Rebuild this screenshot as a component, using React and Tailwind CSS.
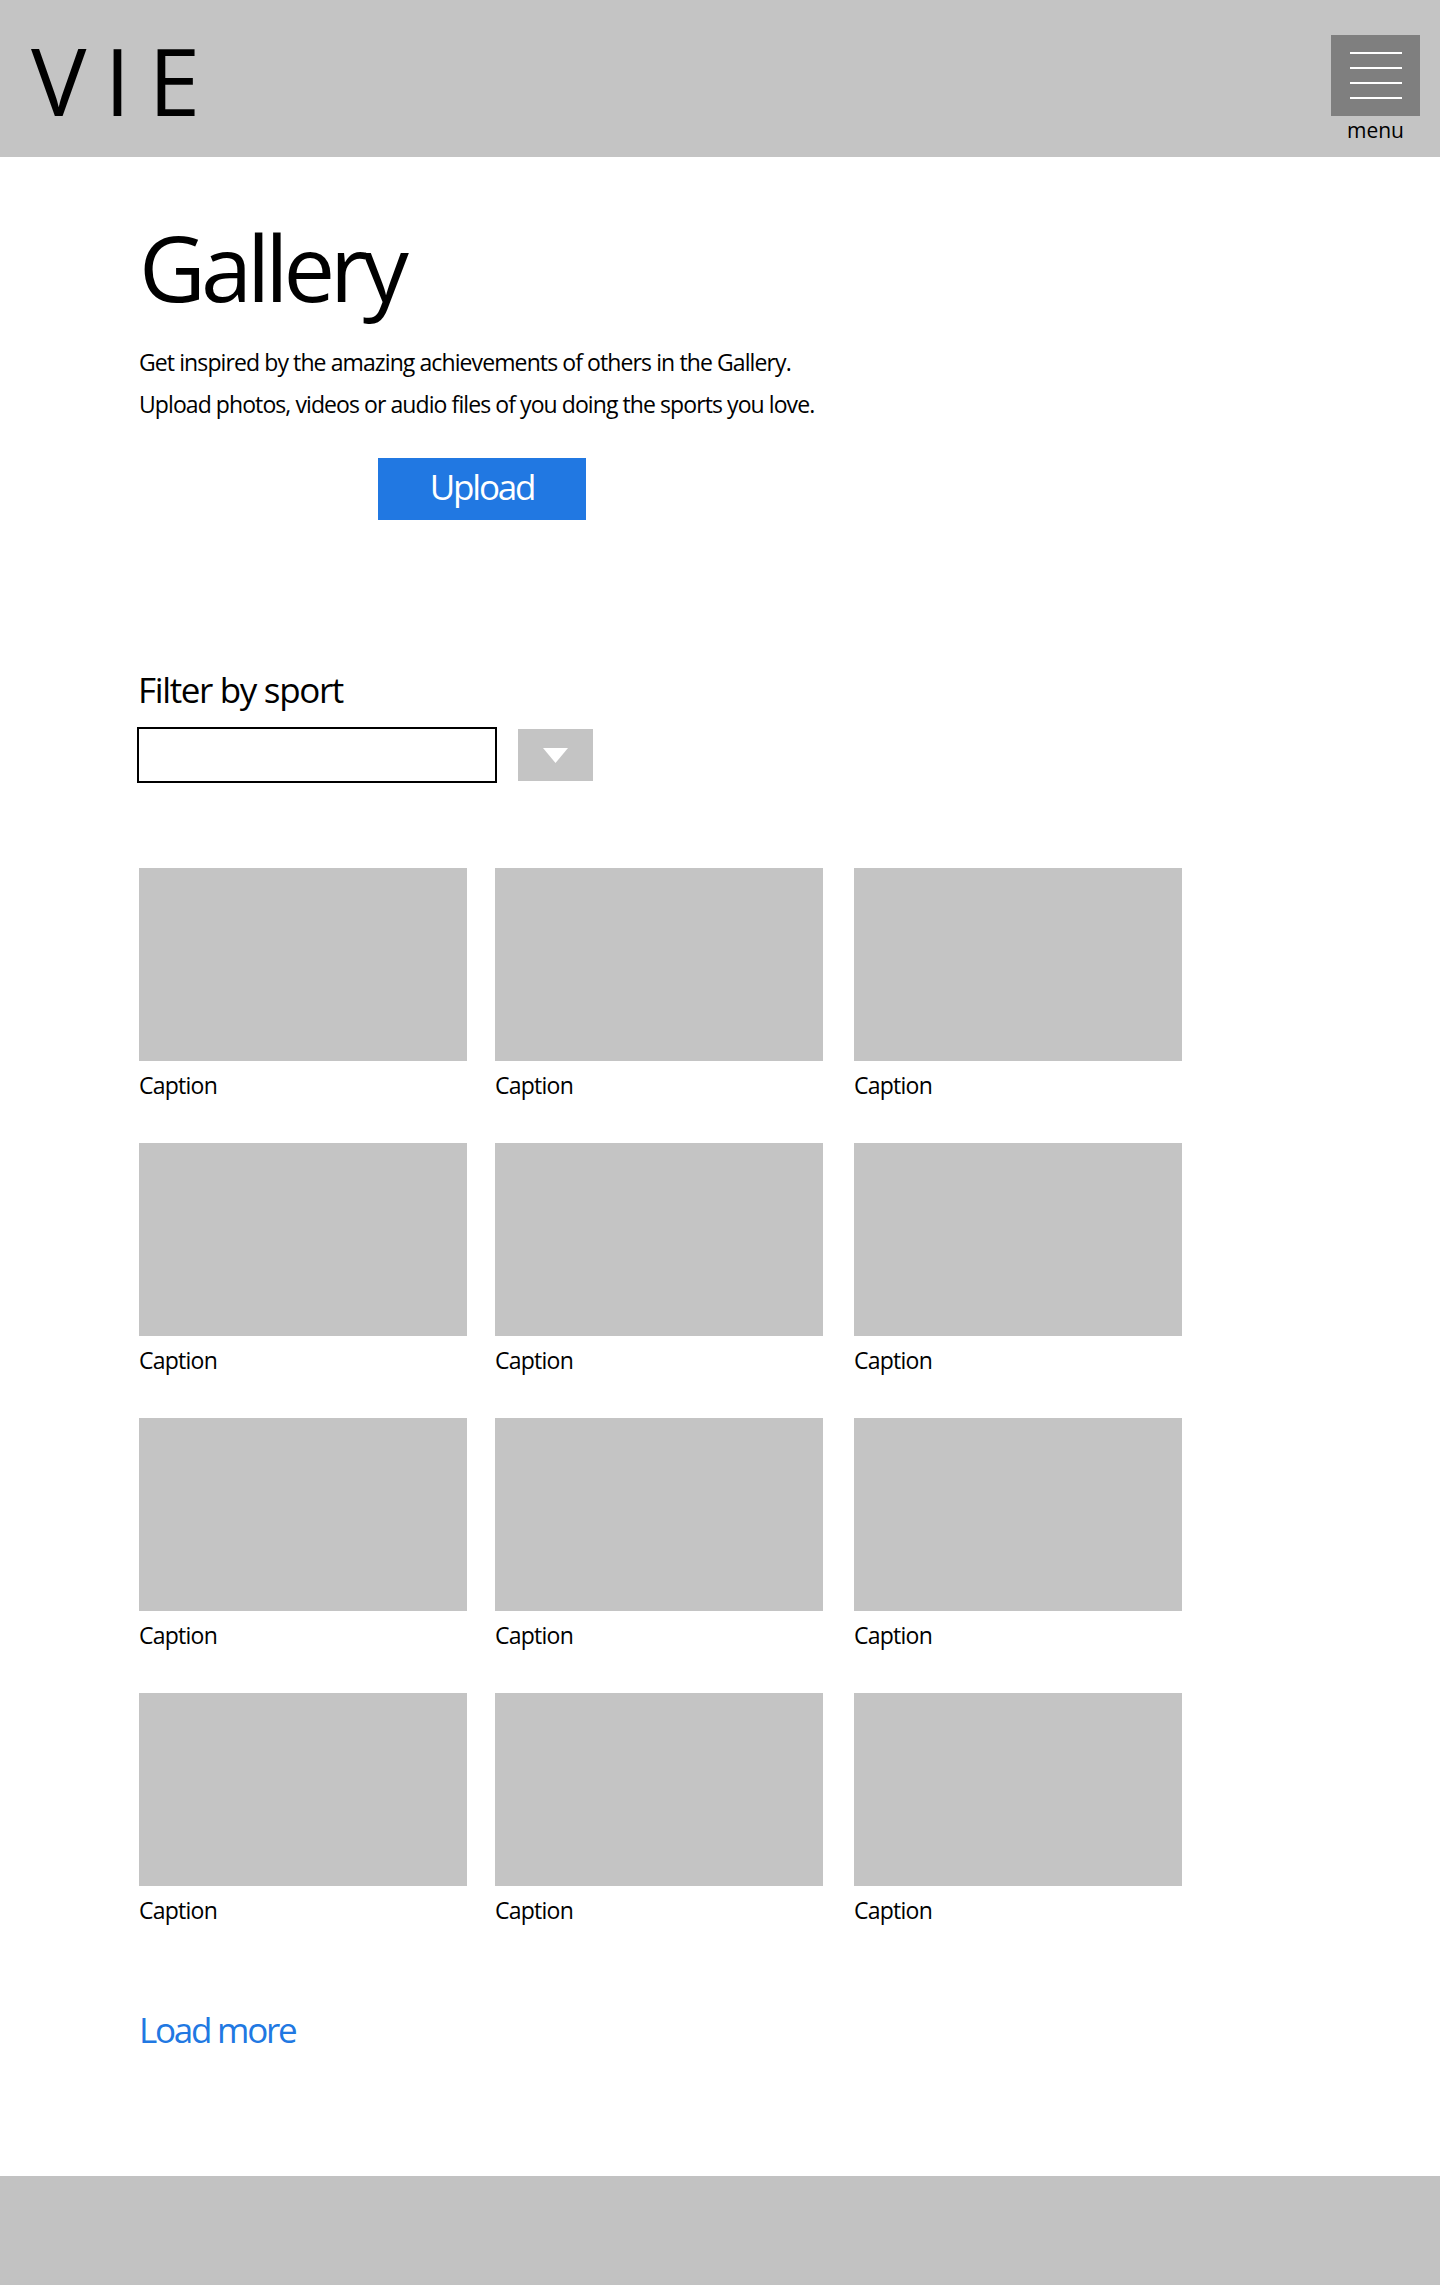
const font = "font-['Open_Sans','Noto_Sans',sans-serif]";

function Tile({ className = "" }) {
  return (
    <div className={`flex flex-col ${className}`}>
      <div className="h-[193px] w-[328px] bg-[#c4c4c4]" />
      <p className="mt-[9px] text-[23px] leading-[30px] tracking-[-0.75px] text-black">Caption</p>
    </div>
  );
}

export default function App() {
  const rows = [0, 1, 2, 3];
  return (
    <div className={`flex min-h-[2285px] w-[1440px] flex-col bg-white text-black ${font}`}>
      <header className="flex h-[157px] items-start justify-between bg-[#c4c4c4] pl-[31px] pr-[20px]">
        <span className="mt-[30px] text-[93px] leading-[100px] tracking-[18px]">VIE</span>
        <div className="mt-[35px] flex w-[89px] flex-col items-center">
          <button className="flex h-[81px] w-[89px] flex-col items-center justify-center gap-[13px] bg-[#7f7f7f]">
            <span className="h-[2px] w-[52px] bg-white" />
            <span className="h-[2px] w-[52px] bg-white" />
            <span className="h-[2px] w-[52px] bg-white" />
            <span className="h-[2px] w-[52px] bg-white" />
          </button>
          <span className="text-[21px] leading-[28px]">menu</span>
        </div>
      </header>
      <main className="flex flex-1 flex-col pl-[139px]">
        <h1 className="mt-[55px] text-[92px] leading-[110px] tracking-[-5px]">Gallery</h1>
        <p className="mt-[19px] text-[23px] leading-[42px] tracking-[-0.9px]">Get inspired by the amazing achievements of others in the Gallery.</p>
        <p className="text-[23px] leading-[42px] tracking-[-0.92px]">Upload photos, videos or audio files of you doing the sports you love.</p>
        <button className="ml-[239px] mt-[33px] h-[62px] w-[208px] bg-[#2178e2] pb-[3px] text-[35px] tracking-[-2.2px] text-white">Upload</button>
        <h2 className="-ml-px mt-[147px] text-[35px] leading-[46px] tracking-[-1.35px]">Filter by sport</h2>
        <div className="mt-[14px] flex items-center">
          <div className="-ml-[2px] h-[56px] w-[360px] border-2 border-black" />
          <button className="ml-[21px] flex h-[52px] w-[75px] items-center justify-center bg-[#c4c4c4]">
            <svg width="25" height="15" viewBox="0 0 25 15"><path d="M0 0H25L12.5 15Z" fill="#fff" /></svg>
          </button>
        </div>
        <div className="mt-[85px] flex flex-col gap-[43px]">
          {rows.map((r) => (
            <div key={r} className="flex">
              <Tile />
              <Tile className="ml-[28px]" />
              <Tile className="ml-[31px]" />
            </div>
          ))}
        </div>
        <a className="mt-[82px] text-[35px] leading-[46px] tracking-[-2.25px] text-[#2178e2]">Load more</a>
      </main>
      <footer className="h-[109px] bg-[#c2c2c2]" />
    </div>
  );
}
